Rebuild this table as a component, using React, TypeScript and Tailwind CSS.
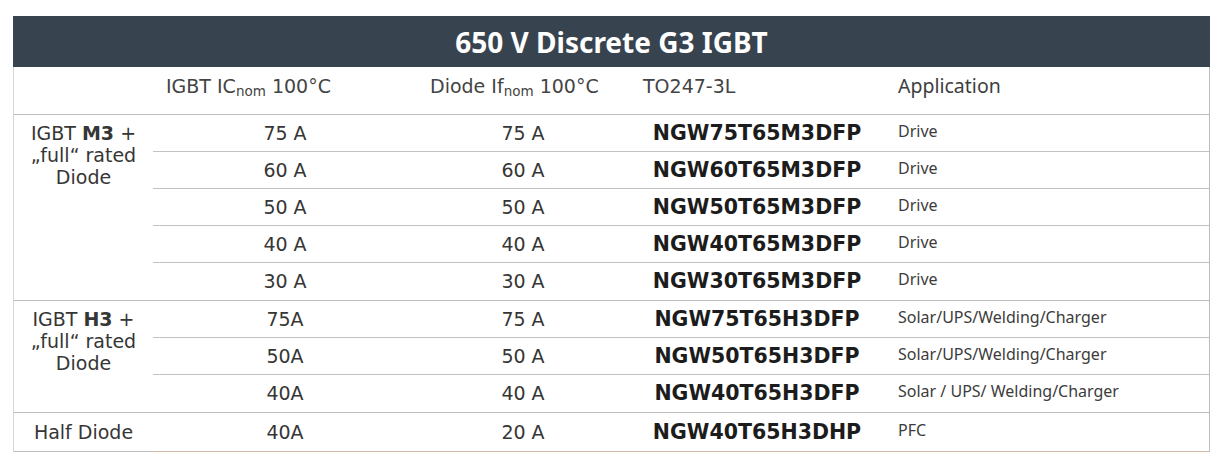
// 650 V Discrete G3 IGBT product table

const DEJAVU = "font-['DejaVu_Sans',sans-serif]";
const NOTO = "font-['Noto_Sans',sans-serif]";

type Row = { ic: string; diode: string; part: string; app: string };

const groups: { label: React.ReactNode; rows: Row[] }[] = [
  {
    label: (
      <>
        IGBT <b>M3</b> +
        <br />
        „full“ rated
        <br />
        Diode
      </>
    ),
    rows: [
      { ic: "75 A", diode: "75 A", part: "NGW75T65M3DFP", app: "Drive" },
      { ic: "60 A", diode: "60 A", part: "NGW60T65M3DFP", app: "Drive" },
      { ic: "50 A", diode: "50 A", part: "NGW50T65M3DFP", app: "Drive" },
      { ic: "40 A", diode: "40 A", part: "NGW40T65M3DFP", app: "Drive" },
      { ic: "30 A", diode: "30 A", part: "NGW30T65M3DFP", app: "Drive" },
    ],
  },
  {
    label: (
      <>
        IGBT <b>H3</b> +
        <br />
        „full“ rated
        <br />
        Diode
      </>
    ),
    rows: [
      { ic: "75A", diode: "75 A", part: "NGW75T65H3DFP", app: "Solar/UPS/Welding/Charger" },
      { ic: "50A", diode: "50 A", part: "NGW50T65H3DFP", app: "Solar/UPS/Welding/Charger" },
      { ic: "40A", diode: "40 A", part: "NGW40T65H3DFP", app: "Solar / UPS/ Welding/Charger" },
    ],
  },
];

function Cells({ r }: { r: Row }) {
  return (
    <>
      <div className={`w-[264px] text-center text-[19px] text-[#363636] ${DEJAVU}`}>{r.ic}</div>
      <div className={`w-[212px] text-center text-[19px] text-[#363636] ${DEJAVU}`}>{r.diode}</div>
      <div className={`w-[256px] text-center text-[20.5px] font-bold text-[#1c1c1c] ${DEJAVU}`}>
        {r.part}
      </div>
      <div className={`flex-1 pl-[13px] pb-[5px] text-[16px] text-[#3c3c3c] ${NOTO}`}>{r.app}</div>
    </>
  );
}

export default function App() {
  return (
    <div className="h-[473px] w-[1223px] bg-white pt-[16px] pl-[13px]">
      <div className="w-[1197px]">
        {/* Title bar */}
        <div
          className={`flex h-[51px] items-center justify-center bg-[#37444f] text-[28px] font-bold text-white ${NOTO}`}
        >
          650 V Discrete G3 IGBT
        </div>

        <div className="border-l border-r border-l-[#d6d6d6] border-r-[#b8bebe]">
          {/* Column headers */}
          <div className={`flex h-[48px] border-b border-[#bdbdbd] pt-[7px] text-[#444] ${DEJAVU}`}>
            <div className="w-[139px]" />
            <div className="w-[264px] pl-[13px] text-[19px] leading-[24px]">
              IGBT IC<sub className="text-[13.5px]">nom</sub> 100°C
            </div>
            <div className="w-[212px] pl-[13px] text-[19px] leading-[24px]">
              Diode If<sub className="text-[13.5px]">nom</sub> 100°C
            </div>
            <div className="w-[256px] pl-[14px] text-[19px] leading-[24px]">TO247-3L</div>
            <div className={`flex-1 pl-[13px] text-[19.5px] leading-[24px] text-[#3e3e3e] ${NOTO}`}>
              Application
            </div>
          </div>

          {/* Grouped rows */}
          {groups.map((g, gi) => (
            <div key={gi} className="flex border-b border-[#bdbdbd]">
              <div
                className={`w-[139px] pt-[7px] text-center text-[19px] leading-[22px] text-[#363636] ${DEJAVU}`}
              >
                {g.label}
              </div>
              <div className="flex-1">
                {g.rows.map((r, i) => (
                  <div
                    key={r.part}
                    className={`flex h-[37px] items-center ${
                      i === g.rows.length - 1 ? "" : "border-b border-[#c2c2c2]"
                    }`}
                  >
                    <Cells r={r} />
                  </div>
                ))}
              </div>
            </div>
          ))}

          {/* Half diode */}
          <div className="flex">
            <div
              className={`flex h-[39px] w-[139px] items-center justify-center border-b border-[#bdbdbd] text-[19px] text-[#363636] ${DEJAVU}`}
            >
              Half Diode
            </div>
            <div className="flex h-[39px] flex-1 items-center border-b border-[#d6b9a9]">
              <Cells r={{ ic: "40A", diode: "20 A", part: "NGW40T65H3DHP", app: "PFC" }} />
            </div>
          </div>
        </div>
      </div>
    </div>
  );
}
